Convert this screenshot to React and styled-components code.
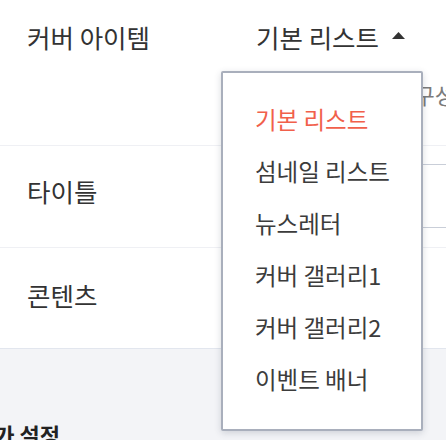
import React from "react";
import styled, { createGlobalStyle } from "styled-components";

const GlobalStyle = createGlobalStyle`
  html, body {
    margin: 0;
    padding: 0;
    background: #ffffff;
    font-family: "Noto Sans CJK KR", "Noto Sans", sans-serif;
  }
  * { box-sizing: border-box; }
`;

const Page = styled.div`
  width: 446px;
  height: 440px;
  overflow: hidden;
  background: #ffffff;
  display: flex;
  flex-direction: column;
`;

const Row = styled.div`
  display: grid;
  grid-template-columns: 221px 1fr;
  height: ${(p) => p.$h}px;
  border-bottom: 1px solid ${(p) => p.$line || "#eff0f4"};
`;

const Label = styled.div`
  padding: ${(p) => p.$top}px 0 0 27px;
  font-size: 25.5px;
  line-height: 36px;
  color: #333333;
  white-space: nowrap;
`;

const Control = styled.div`
  position: relative;
  padding-top: ${(p) => p.$top || 0}px;
  min-width: 0;
  display: flex;
  flex-direction: column;
  align-items: flex-start;
`;

const SelectWrap = styled.div`
  position: relative;
  width: 202px;
`;

const Trigger = styled.button`
  display: flex;
  align-items: center;
  border: 0;
  background: transparent;
  padding: 0 0 0 35px;
  margin: 0;
  font-family: inherit;
  font-size: 25.5px;
  line-height: 36px;
  color: #333333;
  white-space: nowrap;
  cursor: pointer;
`;

const Caret = styled.svg`
  flex: none;
  margin-left: 13px;
  margin-bottom: 3px;
`;

const Menu = styled.ul`
  position: absolute;
  z-index: 10;
  top: calc(100% + 16px);
  left: 0;
  width: 202px;
  margin: 0;
  padding: 20px 0 24px;
  list-style: none;
  background: #ffffff;
  border: 2px solid #a9afbc;
  border-radius: 2px;
  box-shadow: 0 2px 7px rgba(40, 50, 70, 0.18);
`;

const MenuItem = styled.li`
  padding-left: 32px;
  font-size: 23.5px;
  line-height: 52px;
  color: ${(p) => (p.$active ? "#f1604b" : "#3c3c3c")};
  white-space: nowrap;
`;

const Hint = styled.div`
  margin-top: 23px;
  padding-left: 42px;
  font-size: 22px;
  line-height: 33px;
  color: #7b7b7b;
  white-space: nowrap;
`;

const InputBox = styled.div`
  width: 260px;
  height: 64px;
  border: 1px solid #c9ced8;
  background: #ffffff;
  flex: none;
`;

const Settings = styled.div`
  flex: 1;
  background: #f3f4f7;
  padding-top: 69px;
  overflow: hidden;
`;

const SectionTitle = styled.h2`
  margin: 0 0 0 -26px;
  font-size: 22px;
  line-height: 32px;
  font-weight: 700;
  color: #222222;
  white-space: nowrap;
`;

const options = [
  "기본 리스트",
  "섬네일 리스트",
  "뉴스레터",
  "커버 갤러리1",
  "커버 갤러리2",
  "이벤트 배너",
];

export default function App() {
  return (
    <Page>
      <GlobalStyle />
      <Row $h={146}>
        <Label $top={19}>커버 아이템</Label>
        <Control $top={19}>
          <SelectWrap>
            <Trigger type="button">
              기본 리스트
              <Caret width="13" height="7" viewBox="0 0 13 7">
                <polygon points="6.5,0 13,7 0,7" fill="#333333" />
              </Caret>
            </Trigger>
            <Menu>
              {options.map((o, i) => (
                <MenuItem key={o} $active={i === 0}>
                  {o}
                </MenuItem>
              ))}
            </Menu>
          </SelectWrap>
          <Hint>노출할 아이템을 구성합니다</Hint>
        </Control>
      </Row>
      <Row $h={102}>
        <Label $top={27}>타이틀</Label>
        <Control $top={18}>
          <InputBox />
        </Control>
      </Row>
      <Row $h={101} $line="#e2e6ee">
        <Label $top={29}>콘텐츠</Label>
        <Control />
      </Row>
      <Settings>
        <SectionTitle>추가 설정</SectionTitle>
      </Settings>
    </Page>
  );
}
